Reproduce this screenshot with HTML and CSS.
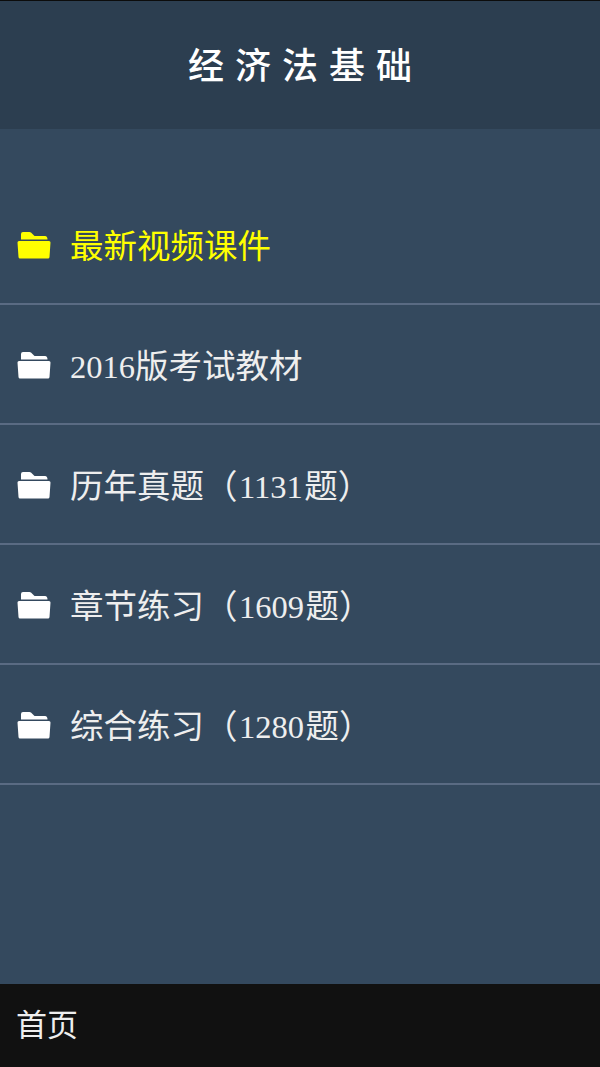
FILE: index.html
```html
<!DOCTYPE html>
<html>

<head>
  <meta charset="UTF-8" />
  <title>经济法基础</title>

  <link rel="stylesheet" href="styles.css">
</head>

<body>
  <div class="page">
    <div class="header">经济法基础</div>
    <div class="list">
      <div class="row active">
        <svg class="folder" viewBox="0 0 34 28"><path d="M4 8.500V3Q4 1 6 1H12.500Q14 1 15.500 3L17.500 5H28Q30.500 5 30.500 8.500Z"/><path d="M2 10H32Q33.500 10 33.500 11.500L32.500 26Q32.400 27.500 31 27.500H3Q1.600 27.500 1.500 26L.5 11.500Q.5 10 2 10Z"/></svg>
        <span class="label">最新视频课件</span>
      </div>
      <div class="row">
        <svg class="folder" viewBox="0 0 34 28"><path d="M4 8.500V3Q4 1 6 1H12.500Q14 1 15.500 3L17.500 5H28Q30.500 5 30.500 8.500Z"/><path d="M2 10H32Q33.500 10 33.500 11.500L32.500 26Q32.400 27.500 31 27.500H3Q1.600 27.500 1.500 26L.5 11.500Q.5 10 2 10Z"/></svg>
        <span class="label"><span class="num">2016</span>版考试教材</span>
      </div>
      <div class="row">
        <svg class="folder" viewBox="0 0 34 28"><path d="M4 8.500V3Q4 1 6 1H12.500Q14 1 15.500 3L17.500 5H28Q30.500 5 30.500 8.500Z"/><path d="M2 10H32Q33.500 10 33.500 11.500L32.500 26Q32.400 27.500 31 27.500H3Q1.600 27.500 1.500 26L.5 11.500Q.5 10 2 10Z"/></svg>
        <span class="label">历年真题（<span class="num count">1131</span>题）</span>
      </div>
      <div class="row">
        <svg class="folder" viewBox="0 0 34 28"><path d="M4 8.500V3Q4 1 6 1H12.500Q14 1 15.500 3L17.500 5H28Q30.500 5 30.500 8.500Z"/><path d="M2 10H32Q33.500 10 33.500 11.500L32.500 26Q32.400 27.500 31 27.500H3Q1.600 27.500 1.500 26L.5 11.500Q.5 10 2 10Z"/></svg>
        <span class="label">章节练习（<span class="num count">1609</span>题）</span>
      </div>
      <div class="row">
        <svg class="folder" viewBox="0 0 34 28"><path d="M4 8.500V3Q4 1 6 1H12.500Q14 1 15.500 3L17.500 5H28Q30.500 5 30.500 8.500Z"/><path d="M2 10H32Q33.500 10 33.500 11.500L32.500 26Q32.400 27.500 31 27.500H3Q1.600 27.500 1.500 26L.5 11.500Q.5 10 2 10Z"/></svg>
        <span class="label">综合练习（<span class="num count">1280</span>题）</span>
      </div>
    </div>
    <div class="footer">首页</div>
  </div>
</body>

</html>
```

FILE: styles.css
```css
html,
body {
  margin: 0;
  padding: 0;
}

.page {
  width: 600px;
  height: 1067px;
  display: flex;
  flex-direction: column;
  background: #34495e;
  font-family: "Liberation Serif", "Noto Sans CJK SC", serif;
  overflow: hidden;
}

.header {
  height: 128px;
  padding-left: 11px;
  border-top: 1px solid #0c0c0c;
  background: #2c3e50;
  color: #fff;
  font-family: "Noto Sans CJK SC", sans-serif;
  font-size: 36px;
  font-weight: 500;
  letter-spacing: 11px;
  line-height: 125px;
  text-align: center;
}

.list {
  flex: 1;
  padding-top: 56px;
}

.row {
  height: 118px;
  display: flex;
  align-items: center;
  border-bottom: 2px solid #5a6b83;
  color: #eee;
  font-size: 33.500px;
}

.row.active {
  color: #ff0;
}

.label {
  margin-bottom: 2px;
}

.num {
  font-size: 32.500px;
}

.count {
  margin: 0 1.500px;
}

.folder {
  width: 34px;
  height: 28px;
  margin: 2px 19px 0 17px;
  fill: #fff;
  flex: none;
}

.active .folder {
  fill: #ff0;
}

.footer {
  height: 83px;
  padding-left: 16px;
  background: #111;
  color: #eee;
  font-family: "Noto Sans CJK SC", sans-serif;
  font-size: 31px;
  line-height: 78px;
}
```
